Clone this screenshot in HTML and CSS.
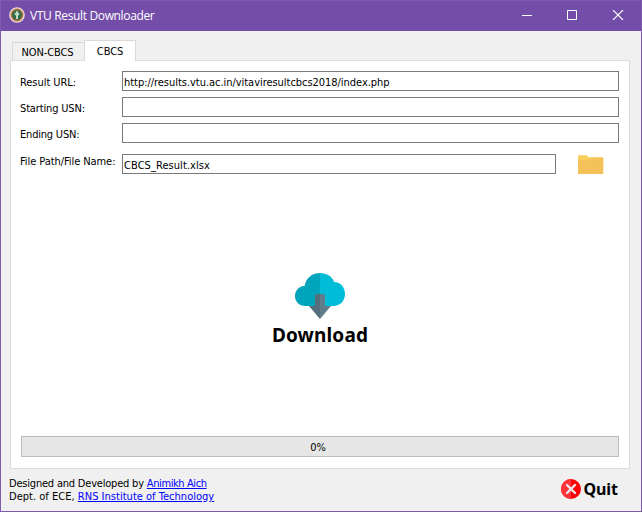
FILE: index.html
```html
<!DOCTYPE html>
<html lang="en">
<head>
<meta charset="utf-8">
<title>VTU Result Downloader</title>
<link rel="stylesheet" href="styles.css">
</head>
<body>
<div class="window">
  <header class="titlebar">
    <svg class="emblem" width="16" height="16" viewBox="0 0 16 16">
      <circle cx="8" cy="8" r="7.8" fill="#e5dfd8"/>
      <circle cx="8" cy="8" r="6.4" fill="#b8733e"/>
      <circle cx="8" cy="8" r="4.8" fill="#286849"/>
      <path d="M5 7L8 4l3 3-2 2v3H7V9z" fill="#9fc7a5"/>
      <path d="M8 4v8" stroke="#e9eee5" stroke-width="1"/>
    </svg>
    <h1 class="title">VTU Result Downloader</h1>
    <svg class="controls" width="102" height="10" viewBox="0 0 102 10" fill="none" stroke="#fff">
      <path d="M0 5.5h10M45.5.5h9v9h-9z"/>
      <path d="M91 0l10 10M101 0L91 10" stroke-width="1.1"/>
    </svg>
  </header>
  <main class="content">
    <nav class="tabs">
      <button class="tab">NON-CBCS</button>
      <button class="tab tab-active">CBCS</button>
    </nav>
    <section class="panel">
      <div class="row"><label class="label url-label" for="url">Result URL:</label><input class="field url" id="url" value="http://results.vtu.ac.in/vitaviresultcbcs2018/index.php"></div>
      <div class="row"><label class="label" for="start">Starting USN:</label><input class="field" id="start"></div>
      <div class="row"><label class="label end-label" for="end">Ending USN:</label><input class="field" id="end"></div>
      <div class="row row-path">
        <label class="label path-label" for="path">File Path/File Name:</label><input class="field path" id="path" value="CBCS_Result.xlsx">
        <svg class="folder" width="26" height="20" viewBox="0 0 26 20">
          <path d="M0 2.2Q0 1.2 1 1.2h7.5l2 2H24Q25.3 3.2 25.3 4.5v4H0z" fill="#f9cf5b"/>
          <path d="M0 6.2h10.5l3-2.5H24.5q.8 0 .8.8v14.7q0 .8-.8.8H.8q-.8 0-.8-.8z" fill="#f5c159"/>
        </svg>
      </div>
      <button class="download">
        <svg width="50" height="46" viewBox="0 0 50 46">
          <path d="M25 0C17 0 10.5 5.5 9.8 12.7C4 13 0 17.5 0 23c0 6 4.5 10 10.5 10H25z" fill="#00a5bb"/>
          <path d="M25 0c7 0 12.3 3.8 14.2 9C45.5 9 50 14.5 50 21c0 7-5 12-11.5 12H25z" fill="#00bcd7"/>
          <path d="M25 21h-3.5q-1.5 0-1.5 1.5V33h-6l11 13z" fill="#546e7b"/>
          <path d="M25 21h3.5q1.5 0 1.5 1.5V33h6L25 46z" fill="#607d8c"/>
        </svg>
        <span class="download-text">Download</span>
      </button>
      <div class="progress">0%</div>
    </section>
    <footer class="footer">
      <p class="credits"><span class="credit-one">Designed and Developed by <a href="#">Animikh Aich</a></span><br><span class="credit-two">Dept. of ECE, <a href="#">RNS Institute of Technology</a></span></p>
      <button class="quit">
        <svg width="20" height="20" viewBox="0 0 20 20">
          <circle cx="10" cy="10" r="10" fill="#fc0005"/>
          <path d="M10 0a10 10 0 0 0 0 20z" fill="#ff3339"/>
          <path d="M6 6l8 8M14 6l-8 8" stroke="#e8e9ee" stroke-width="2.4" stroke-linecap="round"/>
        </svg>
        <span class="quit-text">Quit</span>
      </button>
    </footer>
  </main>
</div>
</body>
</html>
```
FILE: styles.css
```css
* { box-sizing: border-box; }
body { margin: 0; font: 11px/13px "DejaVu Sans Condensed", "DejaVu Sans", sans-serif; font-stretch: condensed; color: #000; }
button, input { font: inherit; color: inherit; border: 0; border-radius: 0; padding: 0; margin: 0; background: none; letter-spacing: inherit; outline: 0; }
.window { width: 642px; height: 512px; display: flex; flex-direction: column; border: 1px solid #7f5bb0; background: #f0f0f0; overflow: hidden; }
.titlebar { height: 30px; display: flex; align-items: center; padding: 0 17px 0 8px; background: #744da9; }
.emblem { margin-top: -2px; }
.title { margin: 0 auto 0 5px; font: 12px/16px "Open Sans", "Noto Sans", sans-serif; color: #fff; letter-spacing: -.35px; white-space: nowrap; }
.controls { margin-top: -2px; }
.content { flex: 1; display: flex; flex-direction: column; padding: 9px 11px 0 9px; }
.tabs { height: 20px; display: flex; align-items: flex-end; padding-left: 2px; }
.tab { width: 73px; height: 18px; border: 1px solid #d9d9d9; border-bottom: 0; margin-right: -1px; padding: 1px 2px 0 0; letter-spacing: -.1px; }
.tab-active { width: 52px; height: 21px; margin-bottom: -1px; padding: 0; background: #fff; position: relative; }
.panel { height: 409px; display: flex; flex-direction: column; padding: 10px 10px 11px 9px; border: 1px solid #dcdcdc; background: #fff; }
.row { display: flex; align-items: center; height: 20px; margin-bottom: 6px; }
.row-path { margin: 5px 0 0; }
.label { width: 102px; padding-top: 2px; white-space: nowrap; letter-spacing: -.15px; }
.url-label { letter-spacing: -.05px; }
.end-label { letter-spacing: -.2px; }
.path-label { margin-top: -8px; letter-spacing: -.07px; }
.field { flex: 1; min-width: 0; height: 20px; border: 1px solid #7a7a7a; background: #fff; padding: 2px 1px 0; }
.url { letter-spacing: -.04px; }
.path { flex: 0 0 434px; letter-spacing: .06px; }
.folder { margin-left: 22px; }
.download { align-self: center; display: flex; flex-direction: column; align-items: center; margin-top: 99px; }
.download-text { margin: 4px 0 0 1px; font: bold 19px/24px "Noto Sans", "Open Sans", sans-serif; letter-spacing: .15px; }
.progress { margin: auto 0 0 1px; height: 21px; padding: 1px 4px 0 0; line-height: 20px; text-align: center; border: 1px solid #bcbcbc; background: #e6e6e6; }
.footer { display: flex; justify-content: space-between; padding: 8px 12px 0 0; }
.credits { margin: 0 0 0 -1px; white-space: nowrap; }
.credits a { color: #00f; }
.credit-one { letter-spacing: -.2px; }
.credit-one a { letter-spacing: -.4px; }
.credit-two { letter-spacing: .02px; }
.quit { height: 24px; display: flex; align-items: center; gap: 2px; }
.quit-text { font: bold 16px/20px "Noto Sans", "Open Sans", sans-serif; letter-spacing: -.05px; }
```
